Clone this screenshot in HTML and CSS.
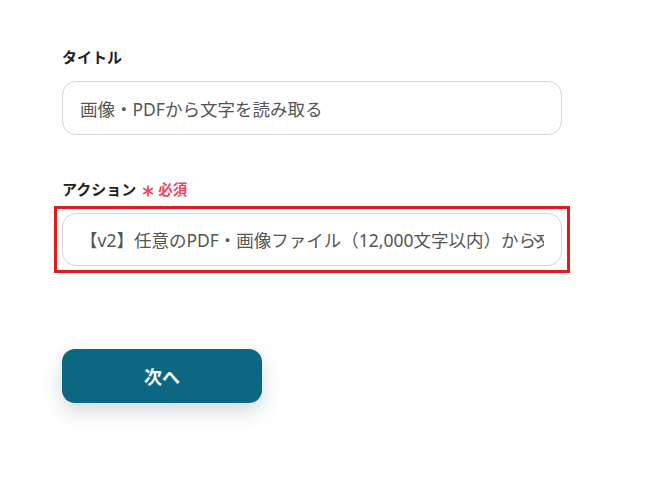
FILE: index.html
```html
<!DOCTYPE html>
<html lang="ja">
<head>
<meta charset="utf-8">
<link rel="stylesheet" href="styles.css">
</head>
<body>
<main class="form">
  <section class="field">
    <div class="label">タイトル</div>
    <div class="input">画像・PDFから文字を読み取る</div>
  </section>
  <section class="field field-action">
    <div class="label">アクション<span class="req"><svg class="star" width="12" height="12" viewBox="0 0 12 12"><g stroke="#f0465a" stroke-width="1.7" stroke-linecap="round"><path d="M6 1v10"/><path d="M1.7 3.5l8.6 5"/><path d="M1.7 8.5l8.6-5"/></g></svg>必須</span></div>
    <div class="highlight">
      <div class="select">
        <span class="select-text">【v2】任意のPDF・画像ファイル（12,000文字以内）から文字を読み取る</span>
        <svg class="chev" width="14" height="14" viewBox="0 0 14 14"><path d="M3 5l4 4 4-4" fill="none" stroke="#555" stroke-width="1.6" stroke-linecap="round" stroke-linejoin="round"/></svg>
      </div>
    </div>
  </section>
  <div class="actions">
    <button class="next">次へ</button>
  </div>
</main>
</body>
</html>
```
FILE: styles.css
```css
html, body {
  margin: 0;
  padding: 0;
  background: #ffffff;
}
body {
  font-family: "Noto Sans", "Noto Sans CJK JP", sans-serif;
  color: #222;
  min-height: 488px;
}
.form {
  padding: 45px 0 60px 62px;
  width: 500px;
}
.field {
  display: flex;
  flex-direction: column;
}
.label {
  font-size: 15px;
  font-weight: 700;
  line-height: 24px;
  color: #222;
  display: flex;
  align-items: center;
}
.input {
  margin-top: 12px;
  height: 54px;
  box-sizing: border-box;
  border: 1px solid #d3d6dc;
  border-radius: 14px;
  padding: 0 17px;
  display: flex;
  align-items: center;
  font-size: 17.5px;
  color: #555;
}
.field-action {
  margin-top: 42px;
}
.req {
  color: #f0465a;
  font-size: 14.5px;
  margin-left: 6px;
  display: flex;
  align-items: center;
}
.star {
  margin-right: 4px;
  position: relative;
  top: 2px;
}
.highlight {
  margin: 5px -8px 0;
  border: 3px solid #e21b1b;
  padding: 4px 5px;
}
.select {
  position: relative;
  height: 53px;
  box-sizing: border-box;
  border: 1px solid #d3d6dc;
  border-radius: 14px;
  padding: 0 17px;
  display: flex;
  align-items: center;
  font-size: 17.5px;
  color: #555;
  overflow: hidden;
}
.select-text {
  white-space: nowrap;
  overflow: hidden;
  width: 466px;
}
.chev {
  position: absolute;
  right: 16px;
  top: 19px;
}
.actions {
  margin-top: 76px;
}
.next {
  width: 200px;
  height: 54px;
  border: none;
  border-radius: 13px;
  background: #0c6882;
  color: #fff;
  font-family: "Noto Sans", "Noto Sans CJK JP", sans-serif;
  font-size: 18px;
  font-weight: 700;
  box-shadow: 0 8px 20px rgba(0, 40, 60, 0.18);
}
```
